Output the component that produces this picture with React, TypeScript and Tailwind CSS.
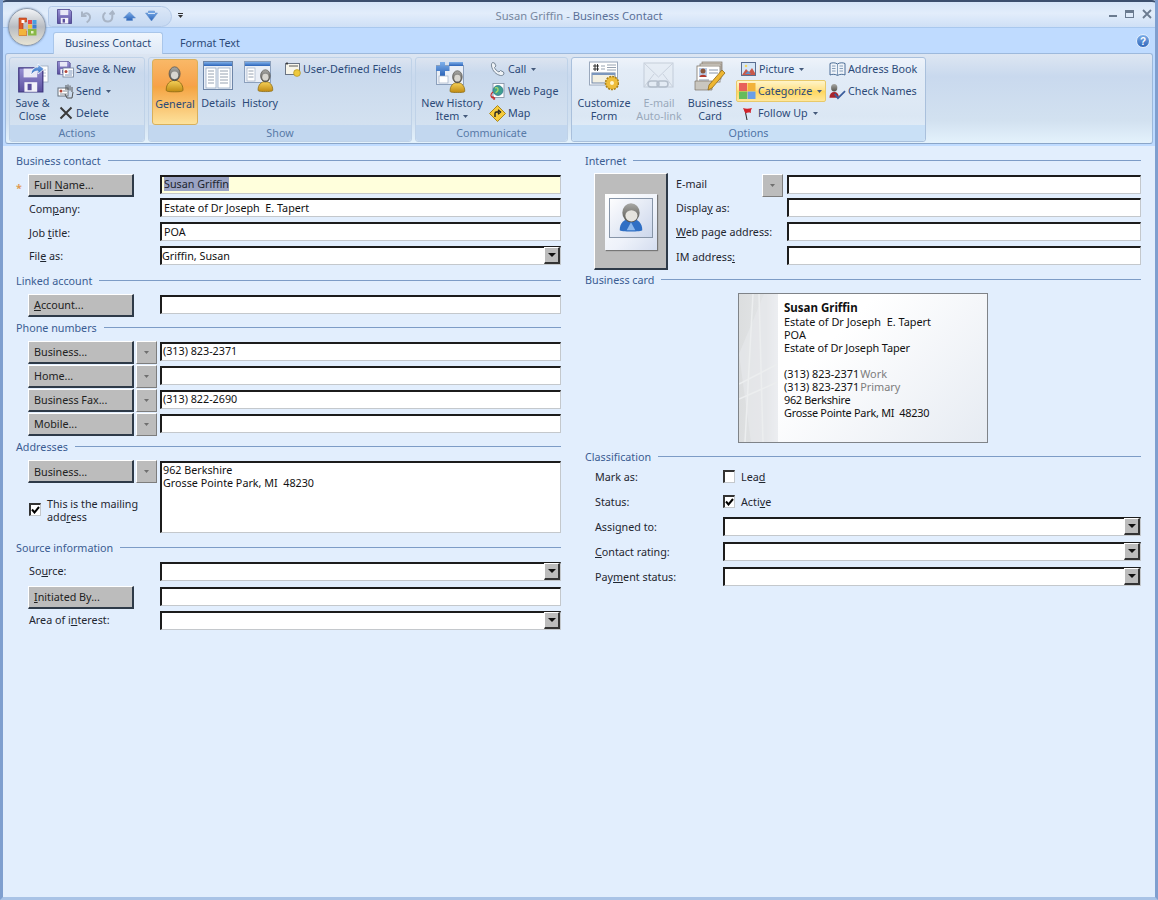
import React from "react";

const Caret = ({ c = "#44597a" }: { c?: string }) => (
  <svg width="5" height="3" viewBox="0 0 5 3" className="shrink-0"><path d="M0 0h5L2.500 3z" fill={c} /></svg>
);

const Defs = () => (
  <svg width="0" height="0" className="absolute">
    <defs>
      <linearGradient id="head" x1="0" y1="0" x2="0" y2="1"><stop offset="0" stopColor="#a9a9a6" /><stop offset="1" stopColor="#55534e" /></linearGradient>
      <linearGradient id="body" x1="0" y1="0" x2="0" y2="1"><stop offset="0" stopColor="#f6d25a" /><stop offset="1" stopColor="#c08a12" /></linearGradient>
      <linearGradient id="blue" x1="0" y1="0" x2="0" y2="1"><stop offset="0" stopColor="#7fb0ea" /><stop offset="1" stopColor="#2b63b8" /></linearGradient>
      <linearGradient id="purple" x1="0" y1="0" x2="0" y2="1"><stop offset="0" stopColor="#9a93d6" /><stop offset="1" stopColor="#5a4f9e" /></linearGradient>
      <linearGradient id="strip" x1="0" y1="0" x2="1" y2="0"><stop offset="0" stopColor="#dcdedf" /><stop offset="0.7" stopColor="#e2e4e6" /><stop offset="1" stopColor="#f2f4f7" /></linearGradient>
    </defs>
  </svg>
);

const Person = ({ x, y, s = 1, skin = "url(#body)" }: { x: number; y: number; s?: number; skin?: string }) => (
  <g transform={`translate(${x} ${y}) scale(${s})`}>
    <path d="M1 20c0-5 3-8 7-8s7 3 7 8c0 1-1 1.500-7 1.500S1 21 1 20z" fill={skin} stroke="#8a6a14" strokeWidth=".7" />
    <ellipse cx="8" cy="6.500" rx="4.600" ry="5.800" fill="url(#head)" stroke="#4e4c48" strokeWidth=".6" />
    <ellipse cx="8" cy="7.800" rx="3" ry="3.200" fill="#d8d6d0" />
  </g>
);

const Floppy = ({ x = 0, y = 0, s = 1 }: { x?: number; y?: number; s?: number }) => (
  <g transform={`translate(${x} ${y}) scale(${s})`}>
    <path d="M.5.500h13l2 2v13H.5z" fill="url(#purple)" stroke="#3f3680" strokeWidth=".8" />
    <rect x="3.500" y="1" width="8.500" height="5.500" fill="#e8e8f6" />
    <rect x="4" y="9.500" width="8" height="6" fill="#f2f2fa" />
    <rect x="6" y="10.500" width="2.500" height="4" fill="#5a4f9e" />
  </g>
);

const SaveCloseIcon = () => (
  <svg width="32" height="32" viewBox="0 0 32 32">
    <rect x="21" y="5" width="10" height="16" fill="#fff" stroke="#9aa8bc" strokeWidth=".8" />
    <path d="M23 9h6M23 12h6M23 15h6" stroke="#a8b4c6" strokeWidth=".8" />
    <Floppy x={1} y={6} s={1.6} />
    <path d="M14 14c0-5 3-8 7-8V3l6 5-6 5v-3c-3 0-5 1-7 4z" fill="url(#blue)" stroke="#fff" strokeWidth=".8" />
  </svg>
);

const SaveNewIcon = () => (
  <svg width="17" height="17" viewBox="0 0 17 17">
    <Floppy x={0} y={0} s={0.85} />
    <rect x="6" y="7" width="10.500" height="9" fill="#fff" stroke="#6f7f98" strokeWidth=".8" />
    <circle cx="9" cy="10.500" r="1.500" fill="#b4483a" />
    <path d="M11.500 10h4M11.500 12h4M8 14h7" stroke="#5978a8" strokeWidth=".8" />
  </svg>
);

const SendIcon = () => (
  <svg width="17" height="17" viewBox="0 0 17 17">
    <rect x="1" y="5" width="10" height="8" fill="#fff" stroke="#66727f" />
    <circle cx="4" cy="8" r="1.500" fill="#b4483a" />
    <path d="M6 8h4M3 11h7" stroke="#66727f" strokeWidth=".8" />
    <path d="M9 7V2M11 7V1.500M13 7.500V2.500M15 9V4M8 11l2 4h5l1-6" fill="none" stroke="#444" strokeWidth=".9" />
  </svg>
);

const DeleteIcon = () => (
  <svg width="16" height="16" viewBox="0 0 16 16"><path d="M2.500 2.500l11 11M13.500 2.500l-11 11" stroke="#3a3a3a" strokeWidth="2" /></svg>
);

const Window2 = ({ x = 0, y = 0 }: { x?: number; y?: number }) => (
  <g transform={`translate(${x} ${y})`}>
    <rect x=".5" y=".5" width="29" height="28" fill="#e9eef6" stroke="#6e86a8" />
    <rect x="1" y="1" width="28" height="4" fill="url(#blue)" />
    <rect x="3" y="7" width="10" height="20" fill="#fff" stroke="#8aa0bc" strokeWidth=".7" />
    <rect x="15" y="7" width="12" height="20" fill="#fff" stroke="#8aa0bc" strokeWidth=".7" />
    <path d="M5 10h6M5 13h6M5 16h6M5 19h6M5 22h6M17 10h8M17 13h8M17 16h8M17 19h8M17 22h8" stroke="#8b97a8" strokeWidth=".9" />
  </g>
);

const GeneralIcon = () => (
  <svg width="22" height="32" viewBox="0 0 22 32"><Person x={1} y={4} s={1.200} /></svg>
);
const DetailsIcon = () => (
  <svg width="31" height="30" viewBox="0 0 31 30"><Window2 /></svg>
);
const HistoryIcon = () => (
  <svg width="32" height="32" viewBox="0 0 32 32">
    <rect x=".5" y=".5" width="26" height="21" fill="#e9eef6" stroke="#8ca0bc" />
    <rect x="1" y="1" width="25" height="4" fill="url(#blue)" />
    <rect x="3" y="7" width="8" height="13" fill="#fff" stroke="#a0b0c6" strokeWidth=".7" />
    <path d="M4.500 10h5M4.500 13h5M4.500 16h5" stroke="#8b97a8" strokeWidth=".9" />
    <Person x={13} y={8} s={1.050} />
  </svg>
);
const UdfIcon = () => (
  <svg width="16" height="16" viewBox="0 0 16 16">
    <rect x=".5" y="2.500" width="14" height="11" fill="#f7f5ea" stroke="#6a7484" />
    <path d="M2 1v3M3 2.500H1M4 5h9" stroke="#333" strokeWidth=".8" />
    <circle cx="12" cy="12" r="3.400" fill="#eec93c" stroke="#a98a18" strokeWidth=".6" />
  </svg>
);
const NewHistoryIcon = () => (
  <svg width="32" height="32" viewBox="0 0 32 32">
    <rect x=".5" y="4.500" width="27" height="19" fill="#e9eef6" stroke="#8ca0bc" />
    <rect x="13" y="1" width="14" height="4" fill="url(#blue)" />
    <path d="M4 1h5v4h4.500v5H9v5H4v-5H-.5V5H4z" fill="url(#blue)" />
    <rect x="3" y="15" width="9" height="7" fill="#fff" stroke="#a0b0c6" strokeWidth=".7" />
    <Person x={13} y={9} s={1.050} />
  </svg>
);
const PhoneIcon = () => (
  <svg width="16" height="16" viewBox="0 0 16 16"><path d="M2.500 1.500l2 .5 1.500 3-1.500 1.500c.6 1.800 2.300 3.600 4.500 4.500l1.500-1.500 3 1.500.5 2c-1 1.500-2.500 1.700-3.500 1.500C6 13.500 2.500 10 1.500 5c-.2-1.300 0-2.500 1-3.500z" fill="#eef2f6" stroke="#6c7c8c" strokeWidth=".9" /></svg>
);
const WebIcon = () => (
  <svg width="17" height="17" viewBox="0 0 17 17">
    <rect x="4" y=".5" width="11" height="14" fill="#fff" stroke="#7f8da0" strokeWidth=".8" />
    <circle cx="9" cy="7.500" r="5" fill="#3f9f8e" stroke="#26708a" strokeWidth=".7" />
    <path d="M6 5c2-1 3 0 3 2s-2 1-2 3" fill="none" stroke="#a8d86a" strokeWidth="1.400" />
    <path d="M4 9C1 11 1 15 6 15.500M6 15.500l-2.500-2M6 15.500l-1.500 1.300" fill="none" stroke="#c62a2a" strokeWidth="1.100" />
  </svg>
);
const MapIcon = () => (
  <svg width="17" height="17" viewBox="0 0 17 17">
    <path d="M8.500.500l8 8-8 8-8-8z" fill="#f6cb3c" stroke="#a9861c" />
    <path d="M6 12V8.500c0-1 .5-1.500 1.500-1.500H10M9 4.800L11.500 7 9 9.200" fill="none" stroke="#222" strokeWidth="1.400" />
  </svg>
);
const CustomizeIcon = () => (
  <svg width="30" height="30" viewBox="0 0 30 30">
    <rect x=".5" y="1" width="28" height="23" fill="#fff" stroke="#9aa8bc" />
    <path d="M4 5h6M4 8h6M6 3v7M8.500 3v7" stroke="#222" strokeWidth=".9" />
    <path d="M12 5h4M12 8h4M18 4h9M18 6.500h9M18 9h9" stroke="#8b97a8" strokeWidth=".9" />
    <rect x="3" y="12" width="23" height="10" fill="#f3f0e2" stroke="#6e86a8" />
    <rect x="3" y="12" width="23" height="2" fill="#7c97bd" />
    <circle cx="23" cy="22" r="6.500" fill="#eebd3a" stroke="#a9801a" strokeDasharray="2 1" strokeWidth="1.600" />
    <circle cx="23" cy="22" r="2" fill="#fff6d0" />
  </svg>
);
const EmailIcon = () => (
  <svg width="32" height="32" viewBox="0 0 32 32" opacity=".55">
    <rect x="1" y="2" width="29" height="24" fill="#e6ecf3" stroke="#a9b4c2" />
    <path d="M1 2l14.500 14L30 2M1 26l10-13M30 26L20 13" fill="none" stroke="#b4bcc8" />
    <rect x="5" y="20" width="11" height="6" rx="3" fill="none" stroke="#8f9aa8" strokeWidth="1.500" />
    <rect x="14" y="20" width="11" height="6" rx="3" fill="none" stroke="#8f9aa8" strokeWidth="1.500" />
  </svg>
);
const BusinessCardIcon = () => (
  <svg width="32" height="32" viewBox="0 0 32 32">
    <rect x="8" y="1" width="20" height="14" fill="#cfc9c0" stroke="#7d7468" strokeWidth=".7" />
    <rect x="6" y="3" width="21" height="15" fill="#e8e4dc" stroke="#7d7468" strokeWidth=".7" />
    <rect x="3" y="5" width="23" height="16" fill="#fff" stroke="#7d7468" strokeWidth=".8" />
    <rect x="5" y="7" width="8" height="9" fill="#b8cbe6" />
    <circle cx="9" cy="10" r="2.500" fill="#8a5a40" />
    <path d="M5.500 16c0-3 7-3 7 0z" fill="#b33a2e" />
    <path d="M15 9h9M15 12h9M5 19h10" stroke="#7a8aa0" strokeWidth=".9" />
    <path d="M1 20h17v9H1z" fill="#c9c6bf" stroke="#7d7468" strokeWidth=".7" />
    <path d="M28 9l3 3-13 15-4 2 1-5z" fill="#eeb632" stroke="#8f6a14" strokeWidth=".8" />
  </svg>
);
const PictureIcon = () => (
  <svg width="16" height="16" viewBox="0 0 16 16">
    <rect x=".5" y="1.500" width="14" height="13" fill="#d6e6f6" stroke="#5a6e90" />
    <path d="M1 14l4-6 3 3 3-4 3 5v2z" fill="#c9594a" />
    <path d="M4 13l3-3 3 3z" fill="#5f8fc9" />
    <circle cx="5" cy="5" r="1.300" fill="#f4d862" />
  </svg>
);
const CategorizeIcon = () => (
  <svg width="17" height="16" viewBox="0 0 17 16">
    <rect x="0" y="0" width="8" height="8" fill="#e8605a" /><rect x="8.500" y="0" width="8" height="8" fill="#f2b23a" />
    <rect x="0" y="8.500" width="8" height="7.500" fill="#66bc5c" /><rect x="8.500" y="8.500" width="8" height="7.500" fill="#6a9ee6" />
  </svg>
);
const FlagIcon = () => (
  <svg width="16" height="16" viewBox="0 0 16 16">
    <path d="M5 5l2 10" stroke="#333" strokeWidth="1.100" />
    <path d="M3 3c3 1.200 6 .8 9 0-1 2-1.500 3-1 5-2-.8-4-.5-5.500.5z" fill="#d2232a" />
  </svg>
);
const BookIcon = () => (
  <svg width="17" height="16" viewBox="0 0 17 16">
    <path d="M8.500 3C6.500 1.500 3 1.500 1 2.500V14c2-1 5.500-1 7.500 .5 2-1.500 5.500-1.500 7.500-.5V2.500C14 1.500 10.500 1.500 8.500 3z" fill="#eef3f9" stroke="#3a5f8a" strokeWidth=".9" />
    <path d="M8.500 3v11M3 5h3.500M3 7.500h3.500M3 10h3.500M10.500 5H14M10.500 7.500H14M10.500 10H14" stroke="#6a88aa" strokeWidth=".8" />
  </svg>
);
const CheckNamesIcon = () => (
  <svg width="18" height="17" viewBox="0 0 18 17">
    <ellipse cx="5.500" cy="4.500" rx="3.300" ry="4" fill="url(#head)" />
    <path d="M.5 15c0-4 2-6 5-6s5 2 5 6z" fill="#a8242c" />
    <path d="M6 11l3.500 4.500L17 8" fill="none" stroke="#3b5d9c" strokeWidth="1.800" />
  </svg>
);
const QatSave = () => (
  <svg width="15" height="15" viewBox="0 0 16 16"><Floppy /></svg>
);
const QatUndo = () => (
  <svg width="14" height="14" viewBox="0 0 14 14"><path d="M3 1.500v4.500h4.500M3.500 5.500C5 3.500 7 3 8.500 3.500c2.500 1 3 3.500 2.200 5.500-.5 1.400-1.700 2.500-3 3.500" fill="none" stroke="#a9b5c6" strokeWidth="2" /></svg>
);
const QatRepeat = () => (
  <svg width="14" height="14" viewBox="0 0 14 14"><path d="M4.500 2.500C2.500 3.800 1.800 6 2.300 8c.6 2.400 2.800 3.800 5 3.500 2.300-.3 4-2.300 4-4.500V2M8.500 4.500l3-3 2 3" fill="none" stroke="#a9b5c6" strokeWidth="2" /></svg>
);
const QatUp = () => (
  <svg width="13" height="11" viewBox="0 0 13 11"><path d="M6.500 1L12.500 7H9.500v2.500h-6V7H.5z" fill="url(#blue)" stroke="#5d8ac8" strokeWidth=".5" /></svg>
);
const QatDown = () => (
  <svg width="13" height="13" viewBox="0 0 13 13"><path d="M3.500 1h6v2h3L6.500 11 .5 3h3z" fill="url(#blue)" stroke="#5d8ac8" strokeWidth=".5" /><path d="M3 3.500h7" stroke="#d4e4f8" /></svg>
);

const OfficeOrb = () => (
  <div className="absolute left-[5px] top-[8px] w-[38px] h-[38px] rounded-full border border-[#8f9bac] bg-[linear-gradient(180deg,#f2f4f7_0%,#b8bcc2_50%,#e8e4d4_100%)] shadow-[0_0_2px_#5f7da8] flex items-center justify-center">
    <svg width="26" height="26" viewBox="0 0 26 26">
      <path d="M5 4h7.500v4H9v9h3.500v4.500H5z" fill="#dd5a2a" stroke="#a93a18" strokeWidth=".6" />
      <path d="M5 15h7.500v6.500H5z" fill="#f3b43a" />
      <rect x="7.500" y="6" width="3" height="3" fill="#fff" />
      <rect x="14" y="6" width="4" height="4" fill="#e5484a" />
      <rect x="18.500" y="6" width="4" height="4" fill="#4a9ee0" />
      <rect x="14" y="10.500" width="4" height="4" fill="#f2c23a" />
      <rect x="18.500" y="10.500" width="4" height="4" fill="#3f7fd0" />
      <path d="M14 15h8.500v6.500H14z" fill="#88b846" />
      <rect x="17" y="17" width="2.500" height="2.500" fill="#e5f0c8" />
    </svg>
  </div>
);

const Small = ({ icon, label, caret, dim }: { icon: React.ReactNode; label: React.ReactNode; caret?: boolean; dim?: boolean }) => (
  <div className={`flex items-center h-[22px] ${dim ? "text-[#8fa4bf]" : "text-[#2c4a78]"}`}>
    <div className="w-[17px] h-[17px] flex items-center justify-center shrink-0">{icon}</div>
    <span className="ml-[2px] whitespace-nowrap">{label}</span>
    {caret && <span className="ml-[5px]"><Caret /></span>}
  </div>
);

const Big = ({ icon, lines, className, caret, dim }: { icon: React.ReactNode; lines: string[]; className: string; caret?: boolean; dim?: boolean }) => (
  <div className={`flex flex-col items-center h-[66px] shrink-0 ${className} ${dim ? "text-[#9aa9bb]" : "text-[#2c4a78]"}`}>
    <div className="h-[38px] pt-[2px] flex items-start justify-center">{icon}</div>
    {lines.map((l, i) => (
      <div key={l} className="leading-[13px] whitespace-nowrap flex items-center">
        {l}
        {caret && i === lines.length - 1 && <span className="ml-[4px]"><Caret /></span>}
      </div>
    ))}
  </div>
);

const Group = ({ label, className, children, active }: { label: string; className: string; children: React.ReactNode; active?: boolean }) => (
  <div className={`flex flex-col rounded-[3px] border shrink-0 ${className} ${active ? "border-[#a9c0dc] bg-[linear-gradient(180deg,#eef3fa_0%,#e3ecf7_15%,#dbe7f4_70%,#e6f1fa_100%)]" : "border-[#bfd2e8] bg-[linear-gradient(180deg,#dce4f0_0%,#c9d9ed_18%,#d3e1f0_80%,#dbe9f4_100%)]"}`}>
    <div className="h-[68px] flex items-start pt-[1px]">{children}</div>
    <div className={`h-[16px] leading-[17px] text-center rounded-b-[3px] ${active ? "bg-[#c9e0f6] text-[#4f73a6]" : "bg-[#c2d7ef] text-[#587aa8]"}`}>{label}</div>
  </div>
);

const Section = ({ title, className = "" }: { title: string; className?: string }) => (
  <div className={`flex items-center gap-[7px] h-[14px] text-[#3a5c92] ${className}`}>
    <span className="whitespace-nowrap pt-[1px]">{title}</span>
    <div className="flex-1 h-px -mt-[1px] bg-[#7d9cc6]" />
  </div>
);

const Btn = ({ children, pad = "pt-[1px]" }: { children: React.ReactNode; pad?: string }) => (
  <div className={`h-[23px] -mt-px flex items-center bg-[#bcbcbc] border-t border-l border-t-white border-l-white border-r-2 border-b-2 border-r-[#2e3a48] border-b-[#2e3a48] text-[#222] w-[106px] pl-[5px] ml-[12px] shrink-0 ${pad}`}>
    <span className="whitespace-pre">{children}</span>
  </div>
);

const Drop = ({ className = "ml-[2px]" }: { className?: string }) => (
  <div className={`w-[21px] h-[23px] -mt-px shrink-0 flex items-center justify-center bg-[#bcbcbc] border-t border-l border-t-white border-l-white border-r border-b border-r-[#7d7d7d] border-b-[#7d7d7d] ${className}`}>
    <Caret c="#6f6f6f" />
  </div>
);

const Field = ({ children, className = "bg-white pl-[1px]", h = "h-[19px]" }: { children?: React.ReactNode; className?: string; h?: string }) => (
  <div className={`flex-1 min-w-0 ${h} border-t-2 border-l-2 border-t-[#1c1c1c] border-l-[#1c1c1c] border-r border-b border-r-[#c4c8cc] border-b-[#c4c8cc] leading-[15px] text-[#111] whitespace-nowrap overflow-hidden ${className}`}>
    {children}
  </div>
);

const Combo = ({ children }: { children?: React.ReactNode }) => (
  <div className="flex-1 min-w-0 h-[19px] flex items-center justify-between bg-white border-t-2 border-l-2 border-t-[#1c1c1c] border-l-[#1c1c1c] border-r border-b border-r-[#c4c8cc] border-b-[#c4c8cc] text-[#111] whitespace-nowrap">
    <span className="leading-[15px]">{children}</span>
    <div className="w-[16px] h-[17px] -mt-[1px] flex items-center justify-center bg-[#bcbcbc] border-t border-l border-t-white border-l-white border-r-2 border-b-2 border-r-[#333] border-b-[#333]">
      <svg width="8" height="4" viewBox="0 0 8 4"><path d="M0 0h8L4 4z" fill="#111" /></svg>
    </div>
  </div>
);

const Label = ({ children, pad }: { children: React.ReactNode; pad: string }) => (
  <div className={`w-[131px] ml-[13px] shrink-0 text-[#1f2630] leading-[17px] whitespace-nowrap ${pad}`}>{children}</div>
);

const Check = ({ on }: { on?: boolean }) => (
  <div className="w-[12px] h-[13px] shrink-0 bg-white border-t-2 border-l-2 border-t-[#333] border-l-[#333] border-r border-b border-r-[#c4c8cc] border-b-[#c4c8cc] flex items-center justify-center">
    {on && <svg width="9" height="8" viewBox="0 0 9 8"><path d="M1 3.500l2.500 3L8 1" fill="none" stroke="#000" strokeWidth="2" /></svg>}
  </div>
);

const LeftColumn = () => (
  <div className="w-[545px] shrink-0">
    <Section title="Business contact" />
    <div className="flex h-[23px] mt-[7px] relative">
      <span className="absolute left-0 top-[5px] text-[#e09a52] font-bold">*</span>
      <Btn>Full <u>N</u>ame...</Btn>
      <div className="w-[26px] shrink-0" />
      <Field className="bg-[#ffffdc] pl-[2px]"><span className="bg-[#9ba4c4] text-[#20242e]">Susan Griffin</span></Field>
    </div>
    <div className="flex h-[24px]"><Label pad="pt-[3px]">Com<u>p</u>any:</Label><Field className="bg-white pl-[2px] pt-[1px]">Estate of Dr Joseph&nbsp; E. Tapert</Field></div>
    <div className="flex h-[24px]"><Label pad="pt-[3px]">Job <u>t</u>itle:</Label><Field className="bg-white pl-[2px] pt-[1px]">POA</Field></div>
    <div className="flex h-[28px]"><Label pad="pt-[2px]">Fil<u>e</u> as:</Label><Combo>Griffin, Susan</Combo></div>

    <Section title="Linked account" />
    <div className="flex h-[26px] mt-[7px]"><Btn><u>A</u>ccount...</Btn><div className="w-[26px] shrink-0" /><Field /></div>

    <Section title="Phone numbers" />
    <div className="flex h-[24px] mt-[7px]"><Btn>Business...</Btn><Drop /><div className="w-[3px] shrink-0" /><Field>(313) 823-2371</Field></div>
    <div className="flex h-[24px]"><Btn>Home...</Btn><Drop /><div className="w-[3px] shrink-0" /><Field /></div>
    <div className="flex h-[24px]"><Btn>Business Fax...</Btn><Drop /><div className="w-[3px] shrink-0" /><Field>(313) 822-2690</Field></div>
    <div className="flex h-[26px]"><Btn>Mobile...</Btn><Drop /><div className="w-[3px] shrink-0" /><Field /></div>

    <Section title="Addresses" />
    <div className="flex h-[80px] mt-[7px]">
      <div className="w-[144px] shrink-0">
        <div className="flex h-[22px]"><Btn pad="pt-[2px]">Business...</Btn><Drop /></div>
        <div className="flex ml-[13px] mt-[15px]">
          <div className="mt-[5px]"><Check on /></div>
          <div className="ml-[6px] leading-[13px] text-[#1f2630]">This is the mailing<br />add<u>r</u>ess</div>
        </div>
      </div>
      <Field h="h-[72px]">
        <div className="leading-[13px] pt-[1px]">962 Berkshire<br />Grosse Pointe Park, MI&nbsp; 48230</div>
      </Field>
    </div>

    <Section title="Source information" />
    <div className="flex h-[25px] mt-[7px]"><Label pad="pt-[1px]">So<u>u</u>rce:</Label><Combo /></div>
    <div className="flex h-[24px]"><Btn><u>I</u>nitiated By...</Btn><div className="w-[26px] shrink-0" /><Field /></div>
    <div className="flex h-[24px]"><Label pad="pt-[1px]">Area of i<u>n</u>terest:</Label><Combo /></div>
  </div>
);

const RLabel = ({ children, pad }: { children: React.ReactNode; pad: string }) => (
  <div className={`w-[111px] shrink-0 leading-[17px] text-[#1f2630] whitespace-nowrap ${pad}`}>{children}</div>
);

const CardStrip = () => (
  <svg width="39" height="148" viewBox="0 0 39 148" className="shrink-0">
    <rect width="39" height="148" fill="url(#strip)" />
    <path d="M0 60L25 0h14v148H25L12 148z" fill="#e8eaec" opacity=".6" />
    <path d="M6 148L14 0M24 148L20 0M0 90L39 70M0 105L39 88" stroke="#eceeef" strokeWidth="1.500" fill="none" />
  </svg>
);

const ClassLabel = ({ children }: { children: React.ReactNode }) => (
  <div className="w-[128px] shrink-0 pt-[2px]">{children}</div>
);

const RightColumn = () => (
  <div className="flex-1 min-w-0">
    <Section title="Internet" />
    <div className="flex mt-[5px] h-[97px]">
      <div className="ml-[9px] w-[74px] h-[97px] shrink-0 flex items-center justify-center bg-[#bcbcbc] border-t border-l border-t-white border-l-white border-r-2 border-b-2 border-r-[#2e3a48] border-b-[#2e3a48]">
        <div className="w-[52px] h-[56px] mt-[2px] bg-[linear-gradient(135deg,#ffffff_0%,#eef2fa_60%,#d5def0_100%)] flex items-start justify-center pt-[4px] shadow-[1px_1px_1px_#777]">
          <div className="w-[44px] h-[40px] border border-[#8795a8] bg-[linear-gradient(135deg,#fdfdfe,#ccd7ec)] flex items-center justify-center">
            <svg width="26" height="32" viewBox="0 0 30 34">
              <path d="M2 31c0-8 5-13 13-13s13 5 13 13c0 2-26 2-26 0z" fill="#2f6fc4" />
              <path d="M15 22l-5 9h10z" fill="#8db8ec" />
              <ellipse cx="15" cy="11" rx="10" ry="11" fill="url(#head)" />
              <ellipse cx="15.500" cy="14.500" rx="7" ry="6.500" fill="#e6e4df" />
            </svg>
          </div>
        </div>
      </div>
      <div className="ml-[8px] flex-1 min-w-0 pt-[2px]">
        <div className="flex h-[23px]">
          <div className="w-[86px] shrink-0 text-[#1f2630] leading-[17px] pt-[1px]">E-mail</div>
          <Drop className="ml-0" />
          <div className="w-[4px] shrink-0" />
          <Field />
        </div>
        <div className="flex h-[24px]"><RLabel pad="pt-[2px]">Displa<u>y</u> as:</RLabel><Field /></div>
        <div className="flex h-[24px]"><RLabel pad="pt-[2px]"><u>W</u>eb page address:</RLabel><Field /></div>
        <div className="flex h-[24px]"><RLabel pad="pt-[3px]">IM address<u>:</u></RLabel><Field /></div>
      </div>
    </div>

    <Section title="Business card" className="mt-[3px]" />
    <div className="mt-[6px] ml-[153px] w-[250px] h-[150px] flex border border-[#7f8388] bg-[linear-gradient(135deg,#ffffff_35%,#e6ebf2_100%)] overflow-hidden">
      <CardStrip />
      <div className="ml-[6px] pt-[6px] leading-[13px] text-[#111] whitespace-nowrap text-[10.900px]">
        <div className="font-bold text-[11.500px] leading-[15px]">Susan Griffin</div>
        <div>Estate of Dr Joseph&nbsp; E. Tapert</div>
        <div>POA</div>
        <div className="tracking-[-0.1px]">Estate of Dr Joseph Taper</div>
        <div className="h-[13px]" />
        <div>(313) 823-2371<span className="ml-[1px] text-[#7d7d7d]">Work</span></div>
        <div>(313) 823-2371<span className="ml-[1px] text-[#7d7d7d]">Primary</span></div>
        <div className="tracking-[-0.3px]">962 Berkshire</div>
        <div className="tracking-[-0.27px]">Grosse Pointe Park, MI&nbsp; 48230</div>
      </div>
    </div>

    <Section title="Classification" className="mt-[7px]" />
    <div className="flex items-center h-[25px] pl-[10px] text-[#1f2630]">
      <ClassLabel>Mark as:</ClassLabel><Check /><span className="ml-[6px] pt-[2px]">Lea<u>d</u></span>
    </div>
    <div className="flex items-center h-[25px] pl-[10px] text-[#1f2630]">
      <ClassLabel>Status:</ClassLabel><Check on /><span className="ml-[6px] pt-[2px]">Acti<u>v</u>e</span>
    </div>
    <div className="flex items-center h-[25px] pl-[10px] text-[#1f2630]">
      <ClassLabel>Assi<u>g</u>ned to:</ClassLabel><Combo />
    </div>
    <div className="flex items-center h-[25px] pl-[10px] text-[#1f2630]">
      <ClassLabel><u>C</u>ontact rating:</ClassLabel><Combo />
    </div>
    <div className="flex items-center h-[25px] pl-[10px] text-[#1f2630]">
      <ClassLabel>Pay<u>m</u>ent status:</ClassLabel><Combo />
    </div>
  </div>
);

export default function App() {
  return (
    <div className="relative w-[1158px] h-[900px] overflow-hidden flex flex-col font-['DejaVu_Sans',sans-serif] text-[10.750px] bg-[#e2eefd] border-x-[3px] border-b-[3px] border-x-[#7f9fcf] border-b-[#a9c3e6]">
      <Defs />
      <div className="-mx-[3px] h-[28px] pt-[3px] shrink-0 relative flex items-center justify-center border-t-2 border-[#3c4f6e] rounded-t-[6px] border-b border-b-[#a9c8ee] bg-[linear-gradient(180deg,#d6e5f8_0%,#e2edfb_45%,#cfe0f6_100%)]">
        <span className="text-[#76869e] text-[11.200px]">Susan Griffin - <span className="text-[#5a7098]">Business Contact</span></span>
        <div className="absolute left-[48px] top-[4px] h-[21px] w-[124px] rounded-r-[12px] rounded-l-[4px] bg-[linear-gradient(180deg,#dbe7f7,#c6d9f2)] border border-[#b4cae8] flex items-center">
          <div className="ml-[8px] w-[15px] flex justify-center"><QatSave /></div>
          <div className="ml-[6px] w-[15px] flex justify-center"><QatUndo /></div>
          <div className="ml-[7px] w-[15px] flex justify-center"><QatRepeat /></div>
          <div className="ml-[7px] w-[15px] flex justify-center"><QatUp /></div>
          <div className="ml-[7px] w-[15px] flex justify-center"><QatDown /></div>
        </div>
        <div className="absolute left-[178px] top-[11px] flex flex-col items-center gap-[1px]">
          <div className="w-[5px] h-px bg-[#333]" />
          <Caret c="#333" />
        </div>
        <div className="absolute right-[6px] top-[7px] flex items-center gap-[8px] text-[#6b7b90]">
          <div className="w-[8px] h-[2px] mt-[4px] bg-[#6b7b90]" />
          <div className="w-[9px] h-[8px] border border-[#6b7b90] border-t-[3px]" />
          <svg width="10" height="10" viewBox="0 0 10 10"><path d="M1 1l8 8M9 1l-8 8" stroke="#6b7b90" strokeWidth="1.800" /></svg>
        </div>
      </div>

      <div className="-mx-[3px] h-[25px] shrink-0 relative bg-[#bfdbff] flex items-end">
        <div className="ml-[53px] w-[110px] h-[22px] rounded-t-[3px] border border-b-0 border-[#a9c6ea] bg-[linear-gradient(180deg,#f0f6fd,#dfe9f6)] text-center leading-[21px] text-[#2c4a78] -mb-px z-10">Business Contact</div>
        <div className="ml-[17px] mb-[1px] leading-[18px] text-[#2c4a78]">Format Text</div>
        <svg width="14" height="14" viewBox="0 0 14 14" className="absolute right-[8px] top-[6px]">
          <circle cx="7" cy="7" r="6.500" fill="url(#blue)" stroke="#e6f0fc" />
          <text x="7" y="10.500" textAnchor="middle" fontSize="10" fontWeight="bold" fill="#fff" fontFamily="Liberation Sans">?</text>
        </svg>
      </div>

      <div className="-mx-[3px] h-[93px] shrink-0 bg-[#bfdbff]">
        <div className="mx-[5px] h-[91px] rounded-[3px] border border-[#9db9dc] border-b-[#8aa5c8] bg-[linear-gradient(180deg,#dde6f2_0%,#c9d9ee_25%,#d2e1f0_75%,#e4f2fc_100%)] flex gap-[3px] pl-[3px] pt-[3px]">
          <Group label="Actions" className="w-[136px] h-[85px]">
            <Big className="w-[37px] ml-[4px]" icon={<SaveCloseIcon />} lines={["Save &", "Close"]} />
            <div className="ml-[6px] -mt-px flex flex-col">
              <Small icon={<SaveNewIcon />} label="Save & New" />
              <Small icon={<SendIcon />} label="Send" caret />
              <Small icon={<DeleteIcon />} label="Delete" />
            </div>
          </Group>
          <Group label="Show" className="w-[264px] h-[85px]">
            <Big className="w-[46px] ml-[3px] rounded-[3px] border border-[#d8b05c] bg-[linear-gradient(180deg,#f9b867_0%,#f7a24a_40%,#f5a443_42%,#fde29c_100%)]" icon={<GeneralIcon />} lines={["General"]} />
            <Big className="w-[37px] ml-[2px]" icon={<DetailsIcon />} lines={["Details"]} />
            <Big className="w-[38px] ml-[4px]" icon={<HistoryIcon />} lines={["History"]} />
            <div className="ml-[5px] -mt-px"><Small icon={<UdfIcon />} label="User-Defined Fields" /></div>
          </Group>
          <Group label="Communicate" className="w-[153px] h-[85px]">
            <Big className="w-[64px] ml-[4px]" icon={<NewHistoryIcon />} lines={["New History", "Item"]} caret />
            <div className="ml-[5px] -mt-px flex flex-col">
              <Small icon={<PhoneIcon />} label="Call" caret />
              <Small icon={<WebIcon />} label="Web Page" />
              <Small icon={<MapIcon />} label="Map" />
            </div>
          </Group>
          <Group label="Options" active className="w-[355px] h-[85px]">
            <Big className="w-[56px] ml-[4px]" icon={<CustomizeIcon />} lines={["Customize", "Form"]} />
            <Big className="w-[50px] ml-[2px]" dim icon={<EmailIcon />} lines={["E-mail", "Auto-link"]} />
            <Big className="w-[46px] ml-[3px]" icon={<BusinessCardIcon />} lines={["Business", "Card"]} />
            <div className="ml-[3px] -mt-px w-[90px] flex flex-col">
              <div className="pl-[4px]"><Small icon={<PictureIcon />} label="Picture" caret /></div>
              <div className="pl-[2px] rounded-[2px] border border-[#e8c96a] bg-[linear-gradient(180deg,#fff4c8_0%,#ffe28a_45%,#ffd65c_50%,#ffe79a_100%)] h-[22px] flex items-center"><Small icon={<CategorizeIcon />} label="Categorize" caret /></div>
              <div className="pl-[3px]"><Small icon={<FlagIcon />} label="Follow Up" caret /></div>
            </div>
            <div className="ml-[3px] -mt-px flex flex-col">
              <Small icon={<BookIcon />} label="Address Book" />
              <Small icon={<CheckNamesIcon />} label="Check Names" />
            </div>
          </Group>
        </div>
      </div>

      <div className="flex flex-1 min-h-0 pl-[13px] pr-[14px] pt-[8px] gap-[24px]">
        <LeftColumn />
        <RightColumn />
      </div>
      <OfficeOrb />
    </div>
  );
}
